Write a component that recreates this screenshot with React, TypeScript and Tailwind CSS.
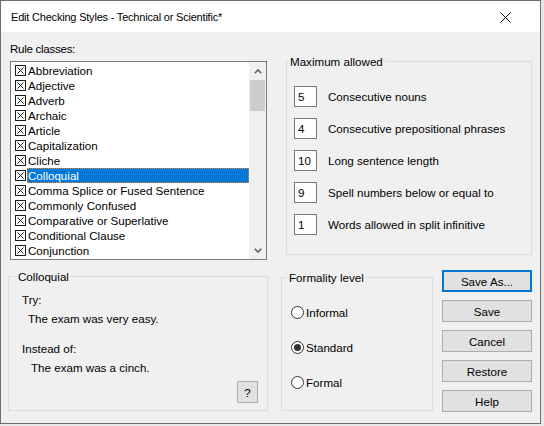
import React from "react";

const rules = [
  "Abbreviation",
  "Adjective",
  "Adverb",
  "Archaic",
  "Article",
  "Capitalization",
  "Cliche",
  "Colloquial",
  "Comma Splice or Fused Sentence",
  "Commonly Confused",
  "Comparative or Superlative",
  "Conditional Clause",
  "Conjunction",
];

const limits = [
  { value: "5", label: "Consecutive nouns" },
  { value: "4", label: "Consecutive prepositional phrases" },
  { value: "10", label: "Long sentence length" },
  { value: "9", label: "Spell numbers below or equal to" },
  { value: "1", label: "Words allowed in split infinitive" },
];

const CheckGlyph = () => (
  <svg width="11" height="11" viewBox="0 0 11 11" className="shrink-0">
    <rect x="0.5" y="0.5" width="10" height="10" fill="none" stroke="#1a1a1a" />
    <path d="M2.5 2.5l6 6M8.5 2.5l-6 6" stroke="#1a1a1a" />
  </svg>
);

const Chevron = ({ down }: { down?: boolean }) => (
  <svg width="8" height="5" viewBox="0 0 8 5">
    <path
      d={down ? "M0.8 0.8L4 4L7.2 0.8" : "M0.8 4.2L4 1L7.2 4.2"}
      fill="none"
      stroke="#606060"
      strokeWidth="1.6"
    />
  </svg>
);

const Radio = ({ label, checked }: { label: string; checked?: boolean }) => (
  <div className="flex items-center h-[15px]">
    <span className="w-[13px] h-[13px] rounded-full border border-[#333333] bg-white flex items-center justify-center">
      {checked && <span className="w-[7px] h-[7px] rounded-full bg-[#333333]" />}
    </span>
    <span className="ml-[2px]">{label}</span>
  </div>
);

const Button = ({ label, primary }: { label: string; primary?: boolean }) => (
  <button
    className={
      primary
        ? "w-[90px] h-[22px] bg-[#e1e1e1] border-2 border-[#0078d7] flex items-center justify-center"
        : "w-[90px] h-[22px] bg-[#e1e1e1] border border-[#adadad] flex items-center justify-center"
    }
  >
    {label}
  </button>
);

export default function App() {
  return (
    <div className="w-[544px] h-[426px] bg-[#e8e8e8] font-['Liberation_Sans',Arial,sans-serif] text-[11.6px] leading-[15px] text-black">
      <div className="w-[541px] h-[424px] border border-[#6d6d6d] bg-[#f0f0f0] flex flex-col">
        {/* Title bar */}
        <div className="h-[31px] shrink-0 bg-white flex items-center justify-between pl-[10px] pr-[29px]">
          <span className="mt-[1px] text-[11px] tracking-[-0.2px]">
            Edit Checking Styles - Technical or Scientific*
          </span>
          <svg width="11" height="11" viewBox="0 0 11 11" className="mt-[1px]">
            <path d="M0.5 0.5l10 10M10.5 0.5l-10 10" stroke="#000" strokeWidth="1" />
          </svg>
        </div>

        {/* Top row */}
        <div className="flex items-start">
          <div className="ml-[9px] mt-[9px]">
            <div className="tracking-[-0.3px]">Rule classes:</div>
            <div className="mt-[5px] w-[257px] h-[199px] border border-[#7a7a7a] bg-white flex">
              <div className="flex-1 pt-[1px] pl-[4px]">
                {rules.map((r) => (
                  <div key={r} className="h-[15px] flex items-center">
                    <CheckGlyph />
                    <span
                      className={
                        r === "Colloquial"
                          ? "ml-[1px] flex-1 h-[15px] flex items-center border border-dotted border-[#ff8728] bg-[#0078d7] text-white"
                          : "ml-[1px] flex-1 h-[15px] flex items-center border border-transparent"
                      }
                    >
                      {r}
                    </span>
                  </div>
                ))}
              </div>
              {/* Scrollbar */}
              <div className="w-[17px] bg-[#f0f0f0] flex flex-col">
                <div className="h-[18px] flex items-center justify-center">
                  <Chevron />
                </div>
                <div className="mx-[1px] h-[31px] bg-[#cdcdcd]" />
                <div className="flex-1" />
                <div className="h-[17px] flex items-center justify-center">
                  <Chevron down />
                </div>
              </div>
            </div>
          </div>

          <fieldset className="ml-[19px] mt-[22px] w-[246px] h-[201px] border border-[#dcdcdc]">
            <legend className="ml-[1px] px-[2px]">Maximum allowed</legend>
            <div className="pl-[7px] pt-[17px] flex flex-col gap-[11px]">
              {limits.map((l) => (
                <div key={l.label} className="flex items-center">
                  <div className="w-[23px] h-[21px] border border-[#7a7a7a] bg-white pl-[3px] flex items-center">
                    {l.value}
                  </div>
                  <span className="ml-[11px]">{l.label}</span>
                </div>
              ))}
            </div>
          </fieldset>
        </div>

        {/* Bottom row */}
        <div className="flex items-start mt-[8px]">
          <fieldset className="ml-[7px] mt-[1px] w-[260px] h-[142px] border border-[#dcdcdc]">
            <legend className="ml-[7px] px-[2px]">Colloquial</legend>
            <div className="pl-[13px] pt-[8px] flex flex-col">
              <div>Try:</div>
              <div className="mt-[4px] ml-[6px]">The exam was very easy.</div>
              <div className="mt-[15px]">Instead of:</div>
              <div className="mt-[4px] ml-[9px]">The exam was a cinch.</div>
              <button className="self-end mt-[6px] mr-[9px] w-[21px] h-[22px] bg-[#e1e1e1] border border-[#adadad] flex items-center justify-center">
                ?
              </button>
            </div>
          </fieldset>

          <fieldset className="ml-[13px] mt-[2px] w-[152px] h-[141px] border border-[#dcdcdc]">
            <legend className="ml-[5px] px-[2px]">Formality level</legend>
            <div className="pl-[9px] pt-[20px] flex flex-col gap-[20px]">
              <Radio label="Informal" />
              <Radio label="Standard" checked />
              <Radio label="Formal" />
            </div>
          </fieldset>

          <div className="ml-[9px] mt-[2px] flex flex-col gap-[8px]">
            <Button label="Save As..." primary />
            <Button label="Save" />
            <Button label="Cancel" />
            <Button label="Restore" />
            <Button label="Help" />
          </div>
        </div>
      </div>
    </div>
  );
}
